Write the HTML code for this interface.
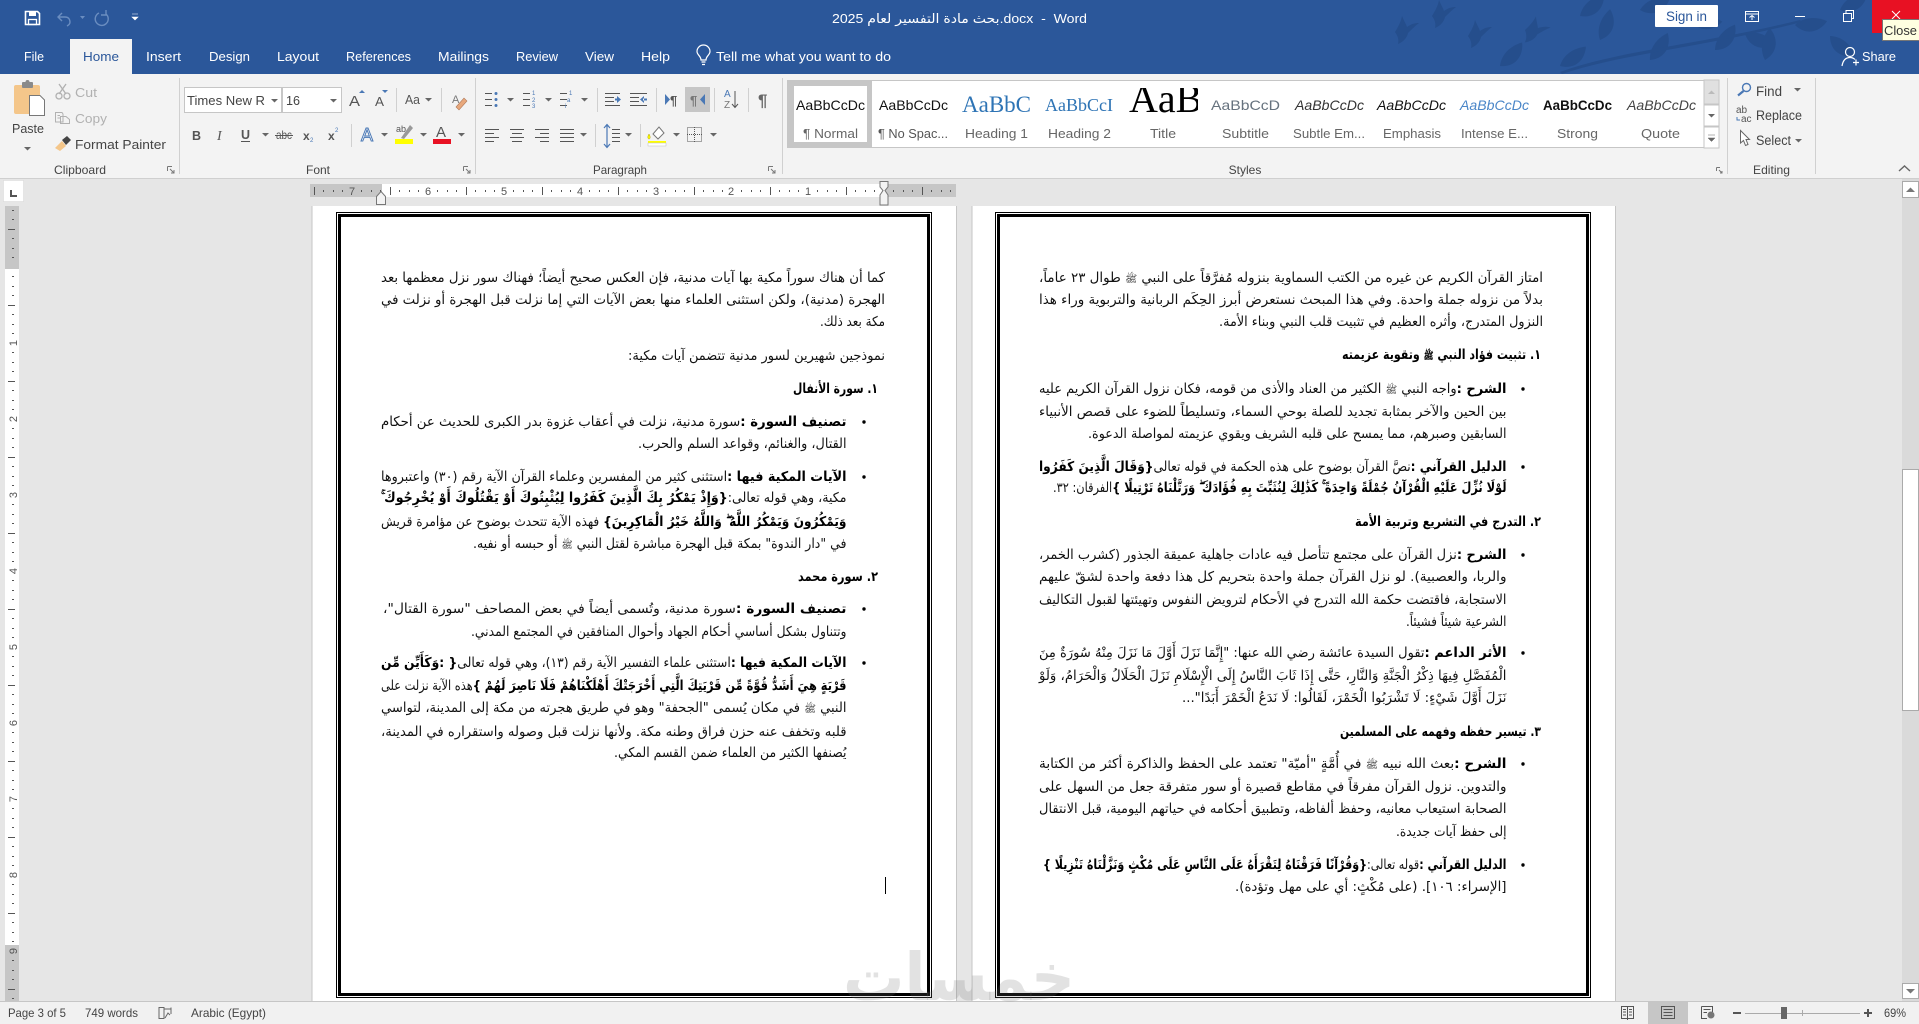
<!DOCTYPE html>
<html lang="en"><head><meta charset="utf-8"><title>Word</title>
<style>
html,body{margin:0;padding:0;width:1919px;height:1024px;overflow:hidden;background:#e6e6e6}
svg{position:absolute;left:0;top:0;display:block}
text{font-family:"Liberation Sans","DejaVu Sans",sans-serif;fill:#444;font-size:12.5px}
.w{fill:#fff;font-size:13px}
.g{fill:#b1b1b1}
.l{fill:#444;font-size:12px}
.d{font-family:"DejaVu Sans","Liberation Sans",sans-serif;fill:#111;font-size:13.5px;direction:rtl;unicode-bidi:embed}
.d tspan.b{font-weight:700;fill:#000}
.d tspan.s{font-size:10px}
.h{font-weight:700;fill:#000}
.r{font-size:11px;fill:#555;text-anchor:middle}
.ic{fill:none;stroke:#555;stroke-width:1}
.ar{fill:#666}
.sep{fill:#d0d0d0}
</style></head><body>
<svg width="1919" height="1024" viewBox="0 0 1919 1024" xmlns="http://www.w3.org/2000/svg">
<defs>
<pattern id="rh" patternUnits="userSpaceOnUse" x="352" y="184" width="76" height="14">
<rect x="9" y="6" width="1" height="2" fill="#555"/><rect x="19" y="6" width="1" height="2" fill="#555"/><rect x="28" y="6" width="1" height="2" fill="#555"/><rect x="38" y="3" width="1" height="8" fill="#555"/><rect x="47" y="6" width="1" height="2" fill="#555"/><rect x="57" y="6" width="1" height="2" fill="#555"/><rect x="66" y="6" width="1" height="2" fill="#555"/>
</pattern>
<pattern id="rv" patternUnits="userSpaceOnUse" x="5" y="343" width="14" height="76">
<rect y="9" x="7" height="1" width="2" fill="#555"/><rect y="19" x="7" height="1" width="2" fill="#555"/><rect y="28" x="7" height="1" width="2" fill="#555"/><rect y="38" x="3" height="1" width="7" fill="#555"/><rect y="47" x="7" height="1" width="2" fill="#555"/><rect y="57" x="7" height="1" width="2" fill="#555"/><rect y="66" x="7" height="1" width="2" fill="#555"/>
</pattern>
<path id="leaf" d="M0 0C6-10 18-14 30-12C26 0 14 8 0 0Z"/>
<path id="bird" d="M0 0C3-5 6-10 7-16C9-11 11-8 12-5C16-8 20-9 24-9C20-6 16-2 13 1C12 6 8 10 3 12C4 8 3 4 0 0Z"/>
<clipPath id="ct"><rect x="1129" y="88" width="69" height="26"/></clipPath>
</defs>

<!-- title bar -->
<rect width="1919" height="74" fill="#2b579a"/>
<g fill="#254e8c">
<use href="#bird" x="1395" y="32"/><use href="#bird" x="1432" y="16"/><use href="#bird" x="1468" y="36"/><use href="#bird" x="1525" y="30" transform="rotate(15 1525 30)"/>
<use href="#leaf" x="1580" y="16" transform="rotate(-20 1580 16)"/><use href="#leaf" x="1600" y="40" transform="rotate(-50 1600 40)"/><use href="#leaf" x="1640" y="10"/><use href="#leaf" x="1650" y="60" transform="rotate(-35 1650 60)"/>
<use href="#leaf" x="1690" y="20" transform="rotate(25 1690 20)"/><use href="#leaf" x="1715" y="50" transform="rotate(-30 1715 50)"/><use href="#leaf" x="1745" y="34" transform="rotate(40 1745 34)"/><use href="#leaf" x="1765" y="60" transform="rotate(-60 1765 60)"/>
<use href="#leaf" x="1795" y="25" transform="rotate(15 1795 25)"/><use href="#leaf" x="1830" y="36" transform="rotate(60 1830 36)"/><use href="#leaf" x="1840" y="10" transform="rotate(-10 1840 10)"/><use href="#leaf" x="1500" y="66" transform="rotate(-25 1500 66)"/><use href="#leaf" x="1560" y="66" transform="rotate(-15 1560 66)"/>
<path d="M1560 72C1620 50 1700 45 1800 20L1802 22C1700 48 1620 54 1562 74Z"/>
</g>
<!-- QAT -->
<path d="M25.500 11.500H37.500L39.500 13.500V24.500H25.500Z" fill="none" stroke="#fff" stroke-width="1.600"/>
<rect x="29" y="11" width="7" height="5" fill="#fff"/><rect x="28.500" y="19.500" width="8" height="5" fill="none" stroke="#fff" stroke-width="1.300"/>
<path d="M62 13L58 17L62 21M58 17H65C69 17 70 20 70 22C70 24 69 25 67 26" fill="none" stroke="#6a8dc0" stroke-width="1.400"/>
<path d="M80 16h5l-2.500 3z" fill="#6a8dc0"/>
<path d="M99 13A6.500 6.500 0 1 0 106 14M106 10V15H101" fill="none" stroke="#6a8dc0" stroke-width="1.400"/>
<path d="M132 14h6M132 17h6l-3 3z" fill="#fff" stroke="#fff" stroke-width=".6"/>
<text x="832" y="23" class="w" style="direction:ltr" textLength="255" lengthAdjust="spacingAndGlyphs">بحث مادة التفسير لعام 2025.docx&#160;&#160;-&#160;&#160;Word</text>

<rect x="1655" y="5" width="63" height="22" rx="1" fill="#fff"/>
<text x="1666" y="21" style="fill:#2b579a;font-size:13.500px" textLength="41" lengthAdjust="spacingAndGlyphs">Sign in</text>
<path d="M1745.500 11.500H1758.500V21.500H1745.500ZM1745.500 14H1758.500M1752 20V15.500M1749.500 17.500L1752 15.500L1754.500 17.500" fill="none" stroke="#fff"/>
<rect x="1795" y="16" width="10" height="1" fill="#fff"/>
<path d="M1843.500 13.500H1851.500V21.500H1843.500ZM1846 13V10.500H1853.500V18.500H1851.500" fill="none" stroke="#fff"/>
<rect x="1872" y="0" width="47" height="33" fill="#e81123"/>
<path d="M1892 11L1900 19M1900 11L1892 19" stroke="#fff" fill="none"/>

<!-- tabs -->
<rect x="70" y="39" width="62" height="36" fill="#f3f3f3"/>
<text x="24" y="61" class="w" textLength="20" lengthAdjust="spacingAndGlyphs">File</text>
<text x="83" y="61" style="fill:#2b579a;font-size:13px" textLength="36" lengthAdjust="spacingAndGlyphs">Home</text>
<text x="146" y="61" class="w" textLength="35" lengthAdjust="spacingAndGlyphs">Insert</text>
<text x="209" y="61" class="w" textLength="41" lengthAdjust="spacingAndGlyphs">Design</text>
<text x="277" y="61" class="w" textLength="42" lengthAdjust="spacingAndGlyphs">Layout</text>
<text x="346" y="61" class="w" textLength="65" lengthAdjust="spacingAndGlyphs">References</text>
<text x="438" y="61" class="w" textLength="51" lengthAdjust="spacingAndGlyphs">Mailings</text>
<text x="516" y="61" class="w" textLength="42" lengthAdjust="spacingAndGlyphs">Review</text>
<text x="585" y="61" class="w" textLength="29" lengthAdjust="spacingAndGlyphs">View</text>
<text x="641" y="61" class="w" textLength="29" lengthAdjust="spacingAndGlyphs">Help</text>
<text x="716" y="61" class="w" textLength="175" lengthAdjust="spacingAndGlyphs">Tell me what you want to do</text>
<path d="M701 60C701 56 697 55 697 51.500A6.500 6.500 0 0 1 710 51.500C710 55 706 56 706 60ZM701.500 62H705.500M702 64.500H705" fill="none" stroke="#fff" stroke-width="1.200"/>
<circle cx="1850" cy="52" r="4.500" fill="none" stroke="#fff" stroke-width="1.200"/>
<path d="M1842 66C1843 60 1846 57.500 1850 57.500C1852 57.500 1854 58.500 1855 59.500M1853 62.500H1859M1856 59.500V65.500" fill="none" stroke="#fff" stroke-width="1.200"/>
<text x="1862" y="61" class="w" textLength="34" lengthAdjust="spacingAndGlyphs">Share</text>

<!-- ribbon -->
<rect y="74" width="1919" height="104" fill="#f3f3f3"/>
<rect y="178" width="1919" height="1" fill="#cfcfcf"/>
<g class="sep">
<rect x="179" y="78" width="1" height="96"/><rect x="475" y="78" width="1" height="96"/><rect x="782" y="78" width="1" height="96"/><rect x="1727" y="78" width="1" height="96"/><rect x="1815" y="78" width="1" height="96"/>
<rect x="396" y="88" width="1" height="24"/><rect x="441" y="88" width="1" height="24"/><rect x="351" y="124" width="1" height="23"/>
<rect x="597" y="88" width="1" height="24"/><rect x="656" y="88" width="1" height="24"/><rect x="714" y="88" width="1" height="24"/><rect x="748" y="88" width="1" height="24"/>
<rect x="595" y="124" width="1" height="23"/><rect x="640" y="124" width="1" height="23"/>
</g>

<!-- clipboard -->
<rect x="14" y="85" width="26" height="29" rx="2" fill="#f4c68a"/>
<rect x="22" y="82" width="11" height="6" rx="1" fill="#8a8a8a"/><circle cx="27.500" cy="82" r="2" fill="#8a8a8a"/>
<path d="M29.500 95.500H40L44.500 100V115.500H29.500Z" fill="#fff" stroke="#777"/>
<text x="12" y="133" style="font-size:13px" textLength="32" lengthAdjust="spacingAndGlyphs">Paste</text>
<path d="M24 147h7l-3.500 3.500z" class="ar"/>
<path d="M59 84L66 94M66 84L59 94" fill="none" stroke="#b1b1b1" stroke-width="1.300"/><circle cx="59" cy="96" r="3" fill="none" stroke="#b1b1b1" stroke-width="1.300"/><circle cx="67" cy="96" r="3" fill="none" stroke="#b1b1b1" stroke-width="1.300"/>
<text x="75" y="97" class="g" style="font-size:13px" textLength="22" lengthAdjust="spacingAndGlyphs">Cut</text>
<path d="M55.500 112.500H62L63 114V122H55.500ZM60.500 116.500H66L69.500 119.500V123.500H60.500ZM57.500 115.500H60M57.500 118H60" fill="#f3f3f3" stroke="#b1b1b1"/>
<text x="75" y="123" class="g" style="font-size:13px" textLength="32" lengthAdjust="spacingAndGlyphs">Copy</text>
<path d="M55 148L62 141L66 146L60 151Z" fill="#f4c68a"/><path d="M62 140L67 136L71 140L66 145Z" fill="#444"/>
<text x="75" y="149" style="font-size:13px" textLength="91" lengthAdjust="spacingAndGlyphs">Format Painter</text>
<text x="54" y="174" class="l" textLength="52" lengthAdjust="spacingAndGlyphs">Clipboard</text>
<path d="M167.500 166.500H172M167.500 166.500V171M170 169L174 173M174 170V173H171" fill="none" stroke="#777"/>

<!-- font -->
<rect x="184.500" y="87.500" width="97" height="25" fill="#fff" stroke="#c6c6c6"/>
<rect x="282.500" y="87.500" width="59" height="25" fill="#fff" stroke="#c6c6c6"/>
<text x="187" y="105" style="font-size:13px" textLength="78" lengthAdjust="spacingAndGlyphs">Times New R</text>
<path d="M271 99h7l-3.500 3.500z" class="ar"/>
<text x="286" y="105" style="font-size:13px" textLength="14" lengthAdjust="spacingAndGlyphs">16</text>
<path d="M330 99h7l-3.500 3.500z" class="ar"/>
<text x="349" y="106" style="font-size:15px;fill:#555" textLength="11" lengthAdjust="spacingAndGlyphs">A</text>
<path d="M359 93h6l-3-3z" fill="#4a78b5"/>
<text x="375" y="106" style="font-size:13px;fill:#555" textLength="9" lengthAdjust="spacingAndGlyphs">A</text>
<path d="M382 90h6l-3 3z" fill="#4a78b5"/>
<text x="405" y="104" style="font-size:13px;fill:#555" textLength="15" lengthAdjust="spacingAndGlyphs">Aa</text>
<path d="M425 98h7l-3.500 3.500z" class="ar"/>
<text x="452" y="103" style="font-size:11px;fill:#777">A</text>
<path d="M456 107L464 98L467 101L459 110Z" fill="#e8a87c" stroke="#b07a5a" stroke-width=".6"/>

<text x="192" y="140" style="font-size:12.500px;font-weight:700;fill:#555">B</text>
<text x="217" y="140" style="font-family:'Liberation Serif',serif;font-size:14px;font-style:italic;fill:#555">I</text>
<text x="241" y="139" style="font-size:12.500px;font-weight:700;fill:#555">U</text><rect x="241" y="141" width="9" height="1" fill="#555"/>
<path d="M262 133h7l-3.500 3.500z" class="ar"/>
<text x="276" y="139" style="font-size:12px;fill:#555" textLength="16" lengthAdjust="spacingAndGlyphs">abc</text><rect x="275" y="135" width="18" height="1" fill="#555"/>
<text x="303" y="140" style="font-size:12px;font-weight:700;fill:#555">x</text><text x="310" y="142" style="font-size:6px;fill:#4a78b5">2</text>
<text x="328" y="140" style="font-size:12px;font-weight:700;fill:#555">x</text><text x="335" y="132" style="font-size:6px;fill:#4a78b5">2</text>
<text x="361" y="141" style="font-size:18px;fill:#fff;stroke:#4a78b5;stroke-width:1">A</text>
<path d="M381 133h7l-3.500 3.500z" class="ar"/>
<text x="396" y="132" style="font-size:9px;fill:#555">ab</text><path d="M401 138L410 125L413 128L404 139Z" fill="#999"/>
<rect x="395" y="139" width="18" height="5" fill="#ff0"/>
<path d="M420 133h7l-3.500 3.500z" class="ar"/>
<text x="436" y="137" style="font-size:15px;fill:#555">A</text><rect x="433" y="139" width="18" height="5" fill="#e81123"/>
<path d="M458 133h7l-3.500 3.500z" class="ar"/>
<text x="318" y="174" class="l" text-anchor="middle">Font</text>
<path d="M463.500 166.500H468M463.500 166.500V171M466 169L470 173M470 170V173H467" fill="none" stroke="#777"/>

<!-- paragraph row 1 -->
<g class="ic">
<path d="M485 93.500h7M485 99.500h7M485 105.500h7"/>
<path d="M530 93.500h-7M530 99.500h-7M530 105.500h-7"/>
<path d="M567 93.500h-7M567 99.500h-7M567 105.500h-7"/>
<path d="M605 93.500h15M605 97.500h9M605 101.500h9M605 105.500h15M630 93.500h17M630 97.500h9M630 101.500h9M630 105.500h17"/>
</g>
<g fill="#4a78b5">
<circle cx="496" cy="93.500" r="1.500"/><circle cx="496" cy="99.500" r="1.500"/><circle cx="496" cy="105.500" r="1.500"/>
<path d="M617 96l4 3.500-4 3.500zM615 98.500h3v2h-3z"/>
<path d="M644 96l-4 3.500 4 3.500zM643 98.500h4v2h-4z"/>
</g>
<text x="532" y="95" style="font-size:6px;fill:#4a78b5">1</text><text x="532" y="102" style="font-size:6px;fill:#4a78b5">2</text><text x="532" y="108" style="font-size:6px;fill:#4a78b5">3</text>
<text x="569" y="95" style="font-size:6px;fill:#4a78b5">1</text><text x="567" y="102" style="font-size:6px;fill:#4a78b5">a</text><text x="565" y="108" style="font-size:6px;fill:#4a78b5">i</text>
<path d="M507 98h7l-3.500 3.500zM545 98h7l-3.500 3.500zM581 98h7l-3.500 3.500z" class="ar"/>
<rect x="685" y="87" width="25" height="25" fill="#c6c6c6"/>
<text x="670" y="105" style="font-size:13px;font-weight:700;fill:#555">¶</text><path d="M665 94v11l5-5.500z" fill="#4a78b5"/>
<text x="690" y="105" style="font-size:13px;font-weight:700;fill:#777">¶</text><path d="M705 94v11l-5-5.500z" fill="#4a78b5"/>
<text x="724" y="97" style="font-size:10px;fill:#4a78b5">A</text><text x="724" y="108" style="font-size:10px;fill:#777">Z</text>
<path d="M735 91V107M732 104L735 107.500L738 104" fill="none" stroke="#555"/>
<text x="758" y="106" style="font-size:17px;font-weight:700;fill:#666">¶</text>

<!-- paragraph row 2 -->
<g class="ic">
<path d="M485 129.500h14M485 133.500h9M485 137.500h14M485 141.500h9"/>
<path d="M510 129.500h14M512 133.500h10M510 137.500h14M512 141.500h10"/>
<path d="M535 129.500h14M540 133.500h9M535 137.500h14M540 141.500h9"/>
<path d="M560 129.500h14M560 133.500h14M560 137.500h14M560 141.500h14"/>
<path d="M612 129.500h8M612 133.500h8M612 137.500h8M612 141.500h8"/>
<path d="M687.500 127.500h14v14h-14z" stroke-dasharray="1 1"/><path d="M694.500 127v15M687 134.500h15" stroke-dasharray="1 1"/>
</g>
<path d="M580 133h7l-3.500 3.500zM625 133h7l-3.500 3.500zM673 133h7l-3.500 3.500zM710 133h7l-3.500 3.500z" class="ar"/>
<path d="M607 125V147M604 128L607 124.500L610 128M604 144L607 147.500L610 144" fill="none" stroke="#4a78b5" stroke-width="1.200"/>
<path d="M653 134L659 127L664 133L658 139Z" fill="#fff" stroke="#777"/><path d="M649 134c-2 3-1 5 0 5s2-2 0-5z" fill="#ff0" stroke="#b0a000" stroke-width=".5"/>
<rect x="648" y="141" width="18" height="2" fill="#ff0"/><rect x="648" y="143" width="18" height="3" fill="#fff" stroke="#bbb" stroke-width=".5"/>
<text x="620" y="174" class="l" text-anchor="middle" textLength="54" lengthAdjust="spacingAndGlyphs">Paragraph</text>
<path d="M768.500 166.500H773M768.500 166.500V171M771 169L775 173M775 170V173H772" fill="none" stroke="#777"/>

<!-- styles gallery -->
<rect x="787.500" y="80.500" width="931" height="67" fill="#fff" stroke="#c6c6c6"/>
<rect x="788" y="81" width="84" height="66" fill="#c6c6c6"/><rect x="794" y="86" width="73" height="56" fill="#fff"/>
<text x="796" y="110" style="font-size:14px;fill:#111" textLength="69" lengthAdjust="spacingAndGlyphs">AaBbCcDc</text>
<text x="879" y="110" style="font-size:14px;fill:#111" textLength="69" lengthAdjust="spacingAndGlyphs">AaBbCcDc</text>
<text x="962" y="112" style="font-family:'Liberation Serif',serif;font-size:23px;fill:#2e74b5" textLength="69" lengthAdjust="spacingAndGlyphs">AaBbC</text>
<text x="1045" y="111" style="font-family:'Liberation Serif',serif;font-size:18px;fill:#2e74b5" textLength="68" lengthAdjust="spacingAndGlyphs">AaBbCcI</text>
<g clip-path="url(#ct)"><text x="1129" y="112" style="font-family:'Liberation Serif',serif;font-size:40px;fill:#000">AaB</text></g>
<text x="1211" y="110" style="font-size:14px;fill:#66727e" textLength="69" lengthAdjust="spacingAndGlyphs">AaBbCcD</text>
<text x="1295" y="110" style="font-size:14px;font-style:italic;fill:#333" textLength="69" lengthAdjust="spacingAndGlyphs">AaBbCcDc</text>
<text x="1377" y="110" style="font-size:14px;font-style:italic;fill:#111" textLength="69" lengthAdjust="spacingAndGlyphs">AaBbCcDc</text>
<text x="1460" y="110" style="font-size:14px;font-style:italic;fill:#4a86c8" textLength="69" lengthAdjust="spacingAndGlyphs">AaBbCcDc</text>
<text x="1543" y="110" style="font-size:14px;font-weight:700;fill:#111" textLength="69" lengthAdjust="spacingAndGlyphs">AaBbCcDc</text>
<text x="1627" y="110" style="font-size:14px;font-style:italic;fill:#444" textLength="69" lengthAdjust="spacingAndGlyphs">AaBbCcDc</text>
<text x="803" y="138" style="font-size:13px;fill:#666" textLength="55" lengthAdjust="spacingAndGlyphs">¶ Normal</text>
<text x="878" y="138" style="font-size:13px;fill:#555" textLength="70" lengthAdjust="spacingAndGlyphs">¶ No Spac...</text>
<text x="965" y="138" style="font-size:13px;fill:#666" textLength="63" lengthAdjust="spacingAndGlyphs">Heading 1</text>
<text x="1048" y="138" style="font-size:13px;fill:#666" textLength="63" lengthAdjust="spacingAndGlyphs">Heading 2</text>
<text x="1150" y="138" style="font-size:13px;fill:#666" textLength="26" lengthAdjust="spacingAndGlyphs">Title</text>
<text x="1222" y="138" style="font-size:13px;fill:#666" textLength="47" lengthAdjust="spacingAndGlyphs">Subtitle</text>
<text x="1293" y="138" style="font-size:13px;fill:#666" textLength="72" lengthAdjust="spacingAndGlyphs">Subtle Em...</text>
<text x="1383" y="138" style="font-size:13px;fill:#666" textLength="58" lengthAdjust="spacingAndGlyphs">Emphasis</text>
<text x="1461" y="138" style="font-size:13px;fill:#666" textLength="67" lengthAdjust="spacingAndGlyphs">Intense E...</text>
<text x="1557" y="138" style="font-size:13px;fill:#666" textLength="41" lengthAdjust="spacingAndGlyphs">Strong</text>
<text x="1641" y="138" style="font-size:13px;fill:#666" textLength="39" lengthAdjust="spacingAndGlyphs">Quote</text>
<rect x="1704" y="80" width="15" height="24" fill="#e0e0e0" stroke="#c6c6c6"/>
<rect x="1704" y="105" width="15" height="21" fill="#fff" stroke="#c6c6c6"/>
<rect x="1704" y="127" width="15" height="21" fill="#fff" stroke="#c6c6c6"/>
<path d="M1708 94h7l-3.500-3.500z" fill="#bbb"/><path d="M1708 114h7l-3.500 3.500z" class="ar"/><path d="M1708 135h7M1708 138h7l-3.500 3.500z" fill="#666" stroke="#666" stroke-width=".5"/>
<text x="1245" y="174" class="l" text-anchor="middle">Styles</text>
<path d="M1716.500 167.500H1720M1716.500 167.500V171M1719 170L1722 173M1722 171V173H1720" fill="none" stroke="#777"/>

<!-- editing -->
<circle cx="1746.500" cy="87.500" r="4" fill="none" stroke="#4a78b5" stroke-width="1.400"/><path d="M1743.500 91L1738 95.500" stroke="#4a78b5" stroke-width="2.200"/>
<text x="1756" y="96" style="font-size:13.500px" textLength="26" lengthAdjust="spacingAndGlyphs">Find</text>
<path d="M1794 88h7l-3.500 3.500z" class="ar"/>
<text x="1736" y="113" style="font-size:10px;fill:#555">ab</text><text x="1741" y="122" style="font-size:10px;fill:#555">ac</text>
<path d="M1737 117V120H1740" fill="none" stroke="#4a78b5"/>
<text x="1756" y="120" style="font-size:13.500px" textLength="46" lengthAdjust="spacingAndGlyphs">Replace</text>
<path d="M1740.500 130.500V143L1743.500 140.500L1745.500 145.500L1748 144.500L1746 139.500H1749.500Z" fill="#fff" stroke="#666"/>
<text x="1756" y="145" style="font-size:13.500px" textLength="35" lengthAdjust="spacingAndGlyphs">Select</text>
<path d="M1795 139h7l-3.500 3.500z" class="ar"/>
<text x="1753" y="174" class="l" textLength="37" lengthAdjust="spacingAndGlyphs">Editing</text>
<path d="M1899 171L1904.500 166L1910 171" fill="none" stroke="#666" stroke-width="1.400"/>

<!-- horizontal ruler -->
<rect x="3.500" y="180.500" width="20" height="21" fill="#fff" stroke="#d8d8d8" stroke-dasharray="1 1"/>
<path d="M11 190v6h6" fill="none" stroke="#555" stroke-width="2"/>
<rect x="310" y="184" width="72" height="13" fill="#c6c6c6"/>
<rect x="382" y="184" width="500" height="13" fill="#fff"/>
<rect x="882" y="184" width="74" height="13" fill="#c6c6c6"/>
<rect x="310" y="184" width="646" height="14" fill="url(#rh)"/>
<text x="352" y="195" class="r">7</text><text x="428" y="195" class="r">6</text><text x="504" y="195" class="r">5</text><text x="580" y="195" class="r">4</text><text x="656" y="195" class="r">3</text><text x="731" y="195" class="r">2</text><text x="808" y="195" class="r">1</text>
<path d="M381 191.500L385.500 196.500V204.500H376.500V196.500Z" fill="#f3f3f3" stroke="#777"/>
<path d="M880 181.500H888V187L885 190.500L888 195V205H880V195L883 190.500L880 187Z" fill="#f3f3f3" stroke="#777"/>

<!-- vertical ruler -->
<rect x="5" y="206" width="14" height="63" fill="#c6c6c6"/>
<rect x="5" y="269" width="14" height="676" fill="#fff"/>
<rect x="5" y="945" width="14" height="56" fill="#c6c6c6"/>
<rect x="5" y="206" width="14" height="795" fill="url(#rv)"/>
<text transform="translate(17 343) rotate(-90)" class="r">1</text><text transform="translate(17 419) rotate(-90)" class="r">2</text><text transform="translate(17 495) rotate(-90)" class="r">3</text><text transform="translate(17 571) rotate(-90)" class="r">4</text><text transform="translate(17 647) rotate(-90)" class="r">5</text><text transform="translate(17 723) rotate(-90)" class="r">6</text><text transform="translate(17 799) rotate(-90)" class="r">7</text><text transform="translate(17 875) rotate(-90)" class="r">8</text><text transform="translate(17 951) rotate(-90)" class="r">9</text>

<!-- scrollbar -->
<rect x="1902" y="179" width="17" height="822" fill="#dadada"/>
<rect x="1902.500" y="181.500" width="16" height="16" fill="#fff" stroke="#aaa"/><path d="M1906 192h9l-4.500-4.500z" fill="#777"/>
<rect x="1902.500" y="469.500" width="16" height="241" fill="#fff" stroke="#aaa"/>
<rect x="1902.500" y="983.500" width="16" height="15" fill="#fff" stroke="#aaa"/><path d="M1906 989h9l-4.500 4.500z" fill="#777"/>

<!-- pages -->
<rect x="312" y="206" width="644" height="795" fill="#fff"/>
<rect x="311.500" y="206" width="1" height="795" fill="#c6c6c6"/><rect x="956" y="206" width="1" height="795" fill="#c6c6c6"/>
<rect x="972" y="206" width="643" height="795" fill="#fff"/>
<rect x="971.500" y="206" width="1" height="795" fill="#c6c6c6"/><rect x="1615" y="206" width="1" height="795" fill="#c6c6c6"/>
<g fill="none" stroke="#000">
<rect x="336.500" y="212.500" width="595" height="785"/>
<rect x="339.500" y="215.500" width="589" height="779" stroke-width="3"/>
<rect x="995.500" y="212.500" width="595" height="785"/>
<rect x="998.500" y="215.500" width="589" height="779" stroke-width="3"/>
</g>

<!-- left page text -->
<text class="d" x="885" y="282" textLength="504" lengthAdjust="spacingAndGlyphs">كما أن هناك سوراً مكية بها آيات مدنية، فإن العكس صحيح أيضاً؛ فهناك سور نزل معظمها بعد</text>
<text class="d" x="885" y="304" textLength="504" lengthAdjust="spacingAndGlyphs">الهجرة (مدنية)، ولكن استثنى العلماء منها بعض الآيات التي إما نزلت قبل الهجرة أو نزلت في</text>
<text class="d" x="885" y="326" textLength="65" lengthAdjust="spacingAndGlyphs">مكة بعد ذلك.</text>
<text class="d" x="885" y="360" textLength="257" lengthAdjust="spacingAndGlyphs">نموذجين شهيرين لسور مدنية تتضمن آيات مكية:</text>
<text class="d h" x="878" y="393" textLength="85" lengthAdjust="spacingAndGlyphs">١. سورة الأنفال</text>
<circle cx="864" cy="422" r="1.700" fill="#000"/>
<text class="d" x="846.500" y="426" textLength="465.500" lengthAdjust="spacingAndGlyphs"><tspan class="b">تصنيف السورة :</tspan>سورة مدنية، نزلت في أعقاب غزوة بدر الكبرى للحديث عن أحكام</text>
<text class="d" x="846.500" y="448" textLength="208.500" lengthAdjust="spacingAndGlyphs">القتال، والغنائم، وقواعد السلم والحرب.</text>
<circle cx="864" cy="477" r="1.700" fill="#000"/>
<text class="d" x="846.500" y="481" textLength="465.500" lengthAdjust="spacingAndGlyphs"><tspan class="b">الآيات المكية فيها :</tspan>استثنى كثير من المفسرين وعلماء القرآن الآية رقم (٣٠) واعتبروها</text>
<text class="d" x="846.500" y="502" textLength="465.500" lengthAdjust="spacingAndGlyphs">مكية، وهي قوله تعالى:<tspan class="b">{وَإِذْ يَمْكُرُ بِكَ الَّذِينَ كَفَرُوا لِيُثْبِتُوكَ أَوْ يَقْتُلُوكَ أَوْ يُخْرِجُوكَ ۚ</tspan></text>
<text class="d" x="846.500" y="526" textLength="465.500" lengthAdjust="spacingAndGlyphs"><tspan class="b">وَيَمْكُرُونَ وَيَمْكُرُ اللَّهُ ۖ وَاللَّهُ خَيْرُ الْمَاكِرِينَ}</tspan> فهذه الآية تتحدث بوضوح عن مؤامرة قريش</text>
<text class="d" x="846.500" y="548" textLength="373.500" lengthAdjust="spacingAndGlyphs">في "دار الندوة" بمكة قبل الهجرة مباشرة لقتل النبي <tspan class="s">ﷺ</tspan> أو حبسه أو نفيه.</text>
<text class="d h" x="878" y="581" textLength="80" lengthAdjust="spacingAndGlyphs">٢. سورة محمد</text>
<circle cx="864" cy="609" r="1.700" fill="#000"/>
<text class="d" x="846.500" y="613" textLength="463.500" lengthAdjust="spacingAndGlyphs"><tspan class="b">تصنيف السورة :</tspan>سورة مدنية، وتُسمى أيضاً في بعض المصاحف "سورة القتال"،</text>
<text class="d" x="846.500" y="636" textLength="375.500" lengthAdjust="spacingAndGlyphs">وتتناول بشكل أساسي أحكام الجهاد وأحوال المنافقين في المجتمع المدني.</text>
<circle cx="864" cy="663" r="1.700" fill="#000"/>
<text class="d" x="846.500" y="667" textLength="465.500" lengthAdjust="spacingAndGlyphs"><tspan class="b">الآيات المكية فيها :</tspan>استثنى علماء التفسير الآية رقم (١٣)، وهي قوله تعالى<tspan class="b">{ :وَكَأَيِّن مِّن</tspan></text>
<text class="d" x="846.500" y="690" textLength="465.500" lengthAdjust="spacingAndGlyphs"><tspan class="b">قَرْيَةٍ هِيَ أَشَدُّ قُوَّةً مِّن قَرْيَتِكَ الَّتِي أَخْرَجَتْكَ أَهْلَكْنَاهُمْ فَلَا نَاصِرَ لَهُمْ }</tspan>هذه الآية نزلت على</text>
<text class="d" x="846.500" y="712" textLength="465.500" lengthAdjust="spacingAndGlyphs">النبي <tspan class="s">ﷺ</tspan> في مكان يُسمى "الجحفة" وهو في طريق هجرته من مكة إلى المدينة، لتواسي</text>
<text class="d" x="846.500" y="736" textLength="465.500" lengthAdjust="spacingAndGlyphs">قلبه وتخفف عنه حزن فراق وطنه مكة. ولأنها نزلت قبل وصوله واستقراره في المدينة،</text>
<text class="d" x="846.500" y="757" textLength="232.500" lengthAdjust="spacingAndGlyphs">يُصنفها الكثير من العلماء ضمن القسم المكي.</text>
<rect x="885" y="877" width="1" height="17" fill="#000"/>

<!-- right page text -->
<text class="d" x="1543" y="282" textLength="504" lengthAdjust="spacingAndGlyphs">امتاز القرآن الكريم عن غيره من الكتب السماوية بنزوله مُفرَّقاً على النبي <tspan class="s">ﷺ</tspan> طوال ٢٣ عاماً،</text>
<text class="d" x="1543" y="304" textLength="504" lengthAdjust="spacingAndGlyphs">بدلاً من نزوله جملة واحدة. وفي هذا المبحث نستعرض أبرز الحِكَم الربانية والتربوية وراء هذا</text>
<text class="d" x="1543" y="326" textLength="324" lengthAdjust="spacingAndGlyphs">النزول المتدرج، وأثره العظيم في تثبيت قلب النبي وبناء الأمة.</text>
<text class="d h" x="1541" y="359" textLength="199" lengthAdjust="spacingAndGlyphs">١. تثبيت فؤاد النبي <tspan class="s">ﷺ</tspan> وتقوية عزيمته</text>
<circle cx="1523" cy="389" r="1.700" fill="#000"/>
<text class="d" x="1506.500" y="393" textLength="467.500" lengthAdjust="spacingAndGlyphs"><tspan class="b">الشرح :</tspan>واجه النبي <tspan class="s">ﷺ</tspan> الكثير من العناد والأذى من قومه، فكان نزول القرآن الكريم عليه</text>
<text class="d" x="1506.500" y="416" textLength="467.500" lengthAdjust="spacingAndGlyphs">بين الحين والآخر بمثابة تجديد للصلة بوحي السماء، وتسليطاً للضوء على قصص الأنبياء</text>
<text class="d" x="1506.500" y="438" textLength="418.500" lengthAdjust="spacingAndGlyphs">السابقين وصبرهم، مما يمسح على قلبه الشريف ويقوي عزيمته لمواصلة الدعوة.</text>
<circle cx="1523" cy="467" r="1.700" fill="#000"/>
<text class="d" x="1506.500" y="471" textLength="467.500" lengthAdjust="spacingAndGlyphs"><tspan class="b">الدليل القرآني :</tspan>نصَّ القرآن بوضوح على هذه الحكمة في قوله تعالى<tspan class="b">{وَقَالَ الَّذِينَ كَفَرُوا</tspan></text>
<text class="d" x="1506.500" y="492" textLength="453.500" lengthAdjust="spacingAndGlyphs"><tspan class="b">لَوْلَا نُزِّلَ عَلَيْهِ الْقُرْآنُ جُمْلَةً وَاحِدَةً ۚ كَذَٰلِكَ لِنُثَبِّتَ بِهِ فُؤَادَكَ ۖ وَرَتَّلْنَاهُ تَرْتِيلًا }</tspan>الفرقان: ٣٢.</text>
<text class="d h" x="1541" y="526" textLength="186" lengthAdjust="spacingAndGlyphs">٢. التدرج في التشريع وتربية الأمة</text>
<circle cx="1523" cy="555" r="1.700" fill="#000"/>
<text class="d" x="1506.500" y="559" textLength="467.500" lengthAdjust="spacingAndGlyphs"><tspan class="b">الشرح :</tspan>نزل القرآن على مجتمع تتأصل فيه عادات جاهلية عميقة الجذور (كشرب الخمر،</text>
<text class="d" x="1506.500" y="581" textLength="467.500" lengthAdjust="spacingAndGlyphs">والربا، والعصبية). لو نزل القرآن جملة واحدة بتحريم كل هذا دفعة واحدة لشقّ عليهم</text>
<text class="d" x="1506.500" y="604" textLength="467.500" lengthAdjust="spacingAndGlyphs">الاستجابة، فاقتضت حكمة الله التدرج في الأحكام لترويض النفوس وتهيئتها لقبول التكاليف</text>
<text class="d" x="1506.500" y="626" textLength="100.500" lengthAdjust="spacingAndGlyphs">الشرعية شيئاً فشيئاً.</text>
<circle cx="1523" cy="653" r="1.700" fill="#000"/>
<text class="d" x="1506.500" y="657" textLength="467.500" lengthAdjust="spacingAndGlyphs"><tspan class="b">الأثر الداعم :</tspan>تقول السيدة عائشة رضي الله عنها: "إِنَّمَا نَزَلَ أَوَّلَ مَا نَزَلَ مِنْهُ سُورَةٌ مِنَ</text>
<text class="d" x="1506.500" y="680" textLength="467.500" lengthAdjust="spacingAndGlyphs">الْمُفَصَّلِ فِيهَا ذِكْرُ الْجَنَّةِ وَالنَّارِ، حَتَّى إِذَا ثَابَ النَّاسُ إِلَى الْإِسْلَامِ نَزَلَ الْحَلَالُ وَالْحَرَامُ، وَلَوْ</text>
<text class="d" x="1506.500" y="702" textLength="324.500" lengthAdjust="spacingAndGlyphs">نَزَلَ أَوَّلَ شَيْءٍ: لَا تَشْرَبُوا الْخَمْرَ، لَقَالُوا: لَا نَدَعُ الْخَمْرَ أَبَدًا"...</text>
<text class="d h" x="1541" y="736" textLength="201" lengthAdjust="spacingAndGlyphs">٣. تيسير حفظه وفهمه على المسلمين</text>
<circle cx="1523" cy="764" r="1.700" fill="#000"/>
<text class="d" x="1506.500" y="768" textLength="467.500" lengthAdjust="spacingAndGlyphs"><tspan class="b">الشرح :</tspan>بعث الله نبيه <tspan class="s">ﷺ</tspan> في أُمَّةٍ "أميّة" تعتمد على الحفظ والذاكرة أكثر من الكتابة</text>
<text class="d" x="1506.500" y="791" textLength="467.500" lengthAdjust="spacingAndGlyphs">والتدوين. نزول القرآن مفرقاً في مقاطع قصيرة أو سور متفرقة جعل من السهل على</text>
<text class="d" x="1506.500" y="813" textLength="467.500" lengthAdjust="spacingAndGlyphs">الصحابة استيعاب معانيه، وحفظ ألفاظه، وتطبيق أحكامه في حياتهم اليومية، قبل الانتقال</text>
<text class="d" x="1506.500" y="836" textLength="110.500" lengthAdjust="spacingAndGlyphs">إلى حفظ آيات جديدة.</text>
<circle cx="1523" cy="865" r="1.700" fill="#000"/>
<text class="d" x="1506.500" y="869" textLength="463.500" lengthAdjust="spacingAndGlyphs"><tspan class="b">الدليل القرآني :</tspan>قوله تعالى:<tspan class="b">{وَقُرْآنًا فَرَقْنَاهُ لِتَقْرَأَهُ عَلَى النَّاسِ عَلَى مُكْثٍ وَنَزَّلْنَاهُ تَنْزِيلًا }</tspan></text>
<text class="d" x="1506.500" y="891" textLength="271.500" lengthAdjust="spacingAndGlyphs">[الإسراء: ١٠٦]. (على مُكْثٍ: أي على مهل وتؤدة).</text>

<!-- status bar -->
<rect y="1001" width="1919" height="23" fill="#f1f1f1"/>
<rect y="1001" width="1919" height="1" fill="#c6c6c6"/>
<text x="8" y="1017" style="font-size:12px" textLength="58" lengthAdjust="spacingAndGlyphs">Page 3 of 5</text>
<text x="85" y="1017" style="font-size:12px" textLength="53" lengthAdjust="spacingAndGlyphs">749 words</text>
<path d="M159 1007.500H164V1018.500H159ZM164 1009H171M171 1007.500V1014M165 1018L168 1013L170 1015" fill="none" stroke="#666"/>
<text x="191" y="1017" style="font-size:12px" textLength="75" lengthAdjust="spacingAndGlyphs">Arabic (Egypt)</text>
<rect x="1648" y="1002" width="40" height="22" fill="#c6c6c6"/>
<path d="M1621.500 1006.500H1633.500V1018.500H1621.500ZM1627.500 1006.500V1020M1623 1009.500H1626M1623 1012H1626M1623 1015H1626M1629 1009.500H1632M1629 1012H1632M1629 1015H1632" fill="none" stroke="#555"/>
<path d="M1661.500 1006.500H1674.500V1018.500H1661.500ZM1663.500 1009.500H1672.500M1663.500 1012.500H1672.500M1663.500 1015.500H1672.500" fill="none" stroke="#555"/>
<path d="M1701.500 1006.500H1712.500V1012M1701.500 1006.500V1018.500H1707M1703.500 1009.500H1710.500M1703.500 1012.500H1707" fill="none" stroke="#555"/>
<circle cx="1711" cy="1015" r="3.500" fill="#777"/>
<rect x="1733" y="1012" width="8" height="2" fill="#555"/>
<rect x="1745" y="1013" width="115" height="1" fill="#aaa"/>
<rect x="1802" y="1010" width="1" height="6" fill="#aaa"/>
<rect x="1781" y="1007" width="6" height="12" fill="#666"/>
<rect x="1864" y="1012" width="8" height="2" fill="#555"/><rect x="1867" y="1009" width="2" height="8" fill="#555"/>
<text x="1884" y="1017" style="font-size:12px" textLength="22" lengthAdjust="spacingAndGlyphs">69%</text>

<!-- watermark -->
<text x="1075" y="1000" style="font-family:'DejaVu Sans',sans-serif;font-weight:700;font-size:66px;fill:#6e6e6e;fill-opacity:.2;direction:rtl;unicode-bidi:embed" textLength="232" lengthAdjust="spacingAndGlyphs">خمسات</text>

<!-- tooltip -->
<rect x="1882.500" y="19.500" width="37" height="21" fill="#ffffe1" stroke="#767676"/>
<text x="1884" y="35" style="font-size:13px;fill:#333" textLength="33" lengthAdjust="spacingAndGlyphs">Close</text>
</svg>
</body></html>
